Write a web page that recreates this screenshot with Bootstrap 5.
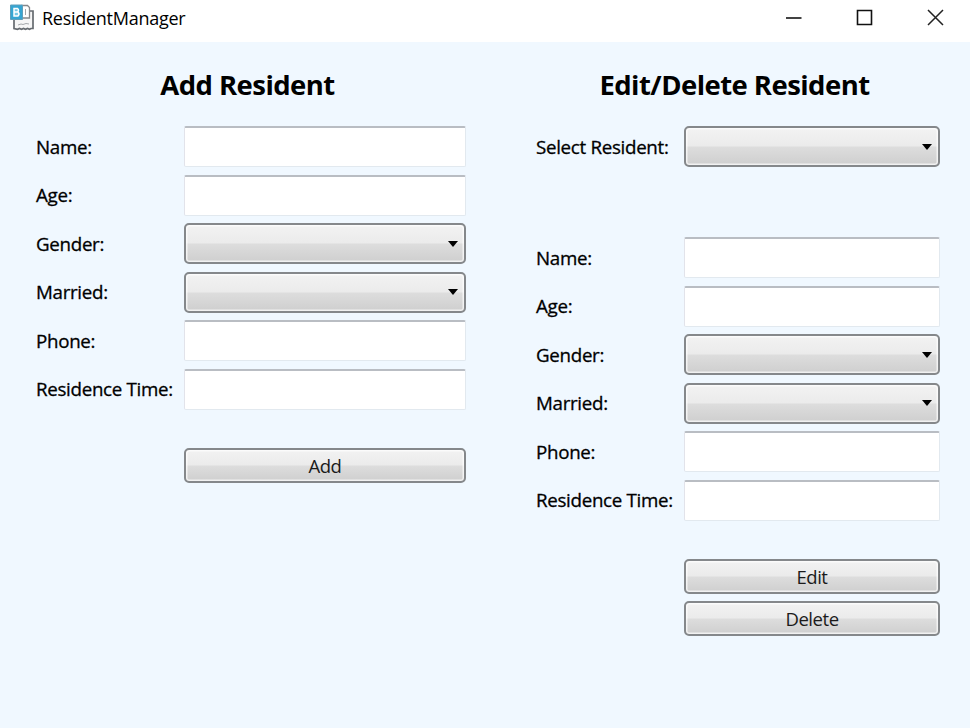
<!DOCTYPE html>
<html lang="en">
<head>
<meta charset="utf-8">
<meta name="viewport" content="width=device-width, initial-scale=1">
<title>ResidentManager</title>
<link href="https://cdn.jsdelivr.net/npm/bootstrap@5.3.0/dist/css/bootstrap.min.css" rel="stylesheet">
<style>
body { font-family: "Open Sans", "Noto Sans", sans-serif; background: #f0f8ff; color: #000; height: 728px; overflow: hidden; }
.titlebar { height: 42px; padding: 0 26px 8px 9px; }
.app-title { font-size: 18px; letter-spacing: -.27px; line-height: 24px; margin-left: 7px; margin-top: 2px; }
.window-buttons { gap: 54px; }
.panes { padding: 24px 30px 0 36px; gap: 70px; }
.pane-add { width: 430px; }
.pane-edit { width: 404px; }
.pane-title { font-size: 27.5px; font-weight: 700; letter-spacing: -.55px; line-height: 38px; height: 60px; padding-right: 7px; }
.fields { gap: 7.5px; }
.field { height: 41px; }
.field-label { width: 148px; padding-top: 1px; font-size: 18.75px; font-weight: 500; letter-spacing: -.31px; white-space: nowrap; -webkit-text-stroke: .3px #000; }
.field .form-control { height: 41px; padding: 4px 6px; border-radius: 2px; border: 1px solid #e2e9ef; border-top: 2px solid #b9bdc3; border-left-color: #e2e3ea; font-size: 18px; }
.chrome { border: 2px solid #85888b; border-radius: 5px; color: #1b1b1b; font-size: 18.5px; letter-spacing: -.45px; background: linear-gradient(#f3f3f3 0%, #ebebeb 49%, #dddddd 51%, #cdcdcd 100%) border-box; box-shadow: inset 0 0 0 1.5px rgba(255,255,255,.7); }
.chrome.dropdown-toggle { height: 41px; padding: 0 6px 0 0; }
.chrome.dropdown-toggle::after { margin: 0; border-top: 6px solid #000; border-left: 5.5px solid transparent; border-right: 5.5px solid transparent; }
.chrome.action { height: 35px; padding: 0; line-height: 31px; margin-left: 148px; }
.actions { margin-top: 38px; gap: 7px; }
.selector { margin-bottom: 70px; }
</style>
<script src="https://cdn.jsdelivr.net/npm/bootstrap@5.3.0/dist/js/bootstrap.bundle.min.js"></script>
</head>
<body>
<header class="titlebar bg-white d-flex align-items-center justify-content-between">
  <div class="d-flex align-items-center">
    <svg width="26" height="28" viewBox="0 0 26 28" aria-hidden="true">
      <path d="M5 8h19v17.500h-2l-1.500 .8-2-.8-2 .8-2-.8-2 .8-2-.8-2 .8-3.500-.8z" fill="#f6f6f6" stroke="#666b70" stroke-width="1.700"/>
      <path d="M13 2.500h5.500l2 2v10.500h-7.500z" fill="#fff" stroke="#85888b" stroke-width="1.300"/>
      <path d="M16.500 6v6M9 22l3-1 2 .5 3-1 3 .5" fill="none" stroke="#a5a8ab" stroke-width="1"/>
      <path d="M1.500 2h12v14.500h-12z" fill="#36a5d2" stroke="#5f9fbb"/>
      <path d="M5 5.500h3.500q2 1.700 0 3.500h-3.500zM5 9h4q2 2 0 4h-4z" fill="#77c8e6" stroke="#fff" stroke-width="1.500"/>
    </svg>
    <span class="app-title">ResidentManager</span>
  </div>
  <div class="window-buttons d-flex align-items-center">
    <svg width="17" height="17" viewBox="0 0 17 17" aria-label="Minimize"><path d="M1 9h15.500" stroke="#222" stroke-width="1.700"/></svg>
    <svg width="17" height="17" viewBox="0 0 17 17" aria-label="Maximize"><path d="M1.500 1.500h14v14h-14z" fill="none" stroke="#111" stroke-width="1.600"/></svg>
    <svg width="17" height="17" viewBox="0 0 17 17" aria-label="Close"><path d="M1 1l15 15M16 1L1 16" stroke="#222" stroke-width="1.500"/></svg>
  </div>
</header>
<main class="panes d-flex align-items-start">
  <section class="pane-add">
    <h1 class="pane-title text-center mb-0">Add Resident</h1>
    <form class="fields d-flex flex-column">
      <div class="field d-flex align-items-center"><label class="field-label flex-shrink-0">Name:</label><input class="form-control" type="text"></div>
      <div class="field d-flex align-items-center"><label class="field-label flex-shrink-0">Age:</label><input class="form-control" type="text"></div>
      <div class="field d-flex align-items-center"><label class="field-label flex-shrink-0">Gender:</label><button type="button" class="btn chrome dropdown-toggle w-100 d-flex align-items-center justify-content-end" aria-label="Gender"></button></div>
      <div class="field d-flex align-items-center"><label class="field-label flex-shrink-0">Married:</label><button type="button" class="btn chrome dropdown-toggle w-100 d-flex align-items-center justify-content-end" aria-label="Married"></button></div>
      <div class="field d-flex align-items-center"><label class="field-label flex-shrink-0">Phone:</label><input class="form-control" type="text"></div>
      <div class="field d-flex align-items-center"><label class="field-label flex-shrink-0">Residence Time:</label><input class="form-control" type="text"></div>
    </form>
    <div class="actions d-flex flex-column"><button type="button" class="btn chrome action">Add</button></div>
  </section>
  <section class="pane-edit">
    <h1 class="pane-title text-center mb-0">Edit/Delete Resident</h1>
    <div class="field selector d-flex align-items-center"><label class="field-label flex-shrink-0">Select Resident:</label><button type="button" class="btn chrome dropdown-toggle w-100 d-flex align-items-center justify-content-end" aria-label="Select Resident"></button></div>
    <form class="fields d-flex flex-column">
      <div class="field d-flex align-items-center"><label class="field-label flex-shrink-0">Name:</label><input class="form-control" type="text"></div>
      <div class="field d-flex align-items-center"><label class="field-label flex-shrink-0">Age:</label><input class="form-control" type="text"></div>
      <div class="field d-flex align-items-center"><label class="field-label flex-shrink-0">Gender:</label><button type="button" class="btn chrome dropdown-toggle w-100 d-flex align-items-center justify-content-end" aria-label="Gender"></button></div>
      <div class="field d-flex align-items-center"><label class="field-label flex-shrink-0">Married:</label><button type="button" class="btn chrome dropdown-toggle w-100 d-flex align-items-center justify-content-end" aria-label="Married"></button></div>
      <div class="field d-flex align-items-center"><label class="field-label flex-shrink-0">Phone:</label><input class="form-control" type="text"></div>
      <div class="field d-flex align-items-center"><label class="field-label flex-shrink-0">Residence Time:</label><input class="form-control" type="text"></div>
    </form>
    <div class="actions d-flex flex-column"><button type="button" class="btn chrome action">Edit</button><button type="button" class="btn chrome action">Delete</button></div>
  </section>
</main>
</body>
</html>
